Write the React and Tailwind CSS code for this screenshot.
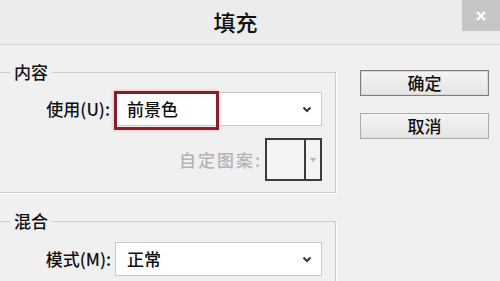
import React from 'react';

function Chevron() {
  return (
    <svg width="10" height="7" viewBox="0 0 10 7" className="shrink-0">
      <polyline points="1.5,1.5 5,5 8.5,1.5" fill="none" stroke="#3a3a3a" strokeWidth="2.2" />
    </svg>
  );
}

function Select({ value, highlight }) {
  return (
    <div className="relative w-[207px] h-[34px] bg-white border border-[#c9c9c9] flex items-center justify-between pl-[11px] pr-[9px]">
      <span className="text-[17px] text-[#111]">{value}</span>
      <Chevron />
      {highlight ? (
        <div className="absolute -left-[2px] -top-[2px] w-[105px] h-[39px] border-[3px] border-[#84202c] shadow-[0_0_3px_#f2a0a8]" />
      ) : null}
    </div>
  );
}

function Group({ label, children, className }) {
  return (
    <div className={'relative border-t border-r border-b border-[#cdcdcd] shadow-[1px_1px_0_#ffffff] ' + className}>
      <div className="absolute -top-[1px] left-0 w-[5px] h-px bg-[#cdcdcd]" />
      <div className="absolute -top-[12px] left-[10px] px-[4px] bg-[#f0f0f0] text-[17px] leading-[22px] text-[#111]">
        {label}
      </div>
      {children}
    </div>
  );
}

function Button({ children, primary }) {
  return (
    <div
      className={
        'w-[129px] h-[26px] flex items-center justify-center text-[17px] text-[#111] bg-gradient-to-b from-[#f4f4f4] to-[#e4e4e4] ' +
        (primary ? 'border border-[#7d7d7d] shadow-[inset_0_0_0_1px_#d8d8d8]' : 'border border-[#acacac]')
      }
    >
      {children}
    </div>
  );
}

export default function App() {
  return (
    <div
      className="w-[500px] h-[281px] overflow-hidden bg-[#f0f0f0] flex flex-col font-medium"
      style={{ fontFamily: '"Noto Sans CJK SC", "Noto Sans", sans-serif' }}
    >
      <div className="relative h-[45px] shrink-0 bg-[#ececec] border-b border-[#d6d6d6] flex items-center justify-center">
        <span className="text-[22px] text-[#111] -mt-[2px] mr-[29px]">填充</span>
        <div className="absolute right-0 top-0 w-[38px] h-[31px] bg-[#c6c6c6] flex items-center justify-center">
          <svg width="12" height="12" viewBox="0 0 12 12">
            <path d="M2 2 L10 10 M10 2 L2 10" stroke="#ffffff" strokeWidth="2.2" />
          </svg>
        </div>
      </div>

      <div className="flex flex-1">
        <div className="w-[336px] shrink-0 flex flex-col">
          <Group label="内容" className="mt-[27px] pt-[19px] pb-[11px] pr-[13px]">
            <div className="flex items-center">
              <div className="w-[110px] text-right text-[17px] text-[#111]">使用(U):</div>
              <div className="ml-[5px]">
                <Select value="前景色" highlight />
              </div>
            </div>
            <div className="flex items-center justify-end mt-[12px]">
              <span className="text-[17px] tracking-[2px] text-[#b4b4b4]">自定图案:</span>
              <div className="ml-[3px] w-[57px] h-[43px] border-2 border-[#3c3c3c] bg-[#f3f3f3] flex">
                <div className="flex-1 border-r-2 border-[#3c3c3c]" />
                <div className="w-[14px] flex items-center justify-center">
                  <svg width="6" height="4" viewBox="0 0 6 4">
                    <polygon points="0,0 6,0 3,4" fill="#b0b0b0" />
                  </svg>
                </div>
              </div>
            </div>
          </Group>

          <Group label="混合" className="mt-[28px] pt-[20px] pb-[11px] pr-[13px]">
            <div className="flex items-center">
              <div className="w-[111px] text-right text-[17px] text-[#111]">模式(M):</div>
              <div className="ml-[4px]">
                <Select value="正常" />
              </div>
            </div>
          </Group>
        </div>

        <div className="ml-[24px] mt-[25px] flex flex-col gap-[17px]">
          <Button primary>确定</Button>
          <Button>取消</Button>
        </div>
      </div>
    </div>
  );
}
